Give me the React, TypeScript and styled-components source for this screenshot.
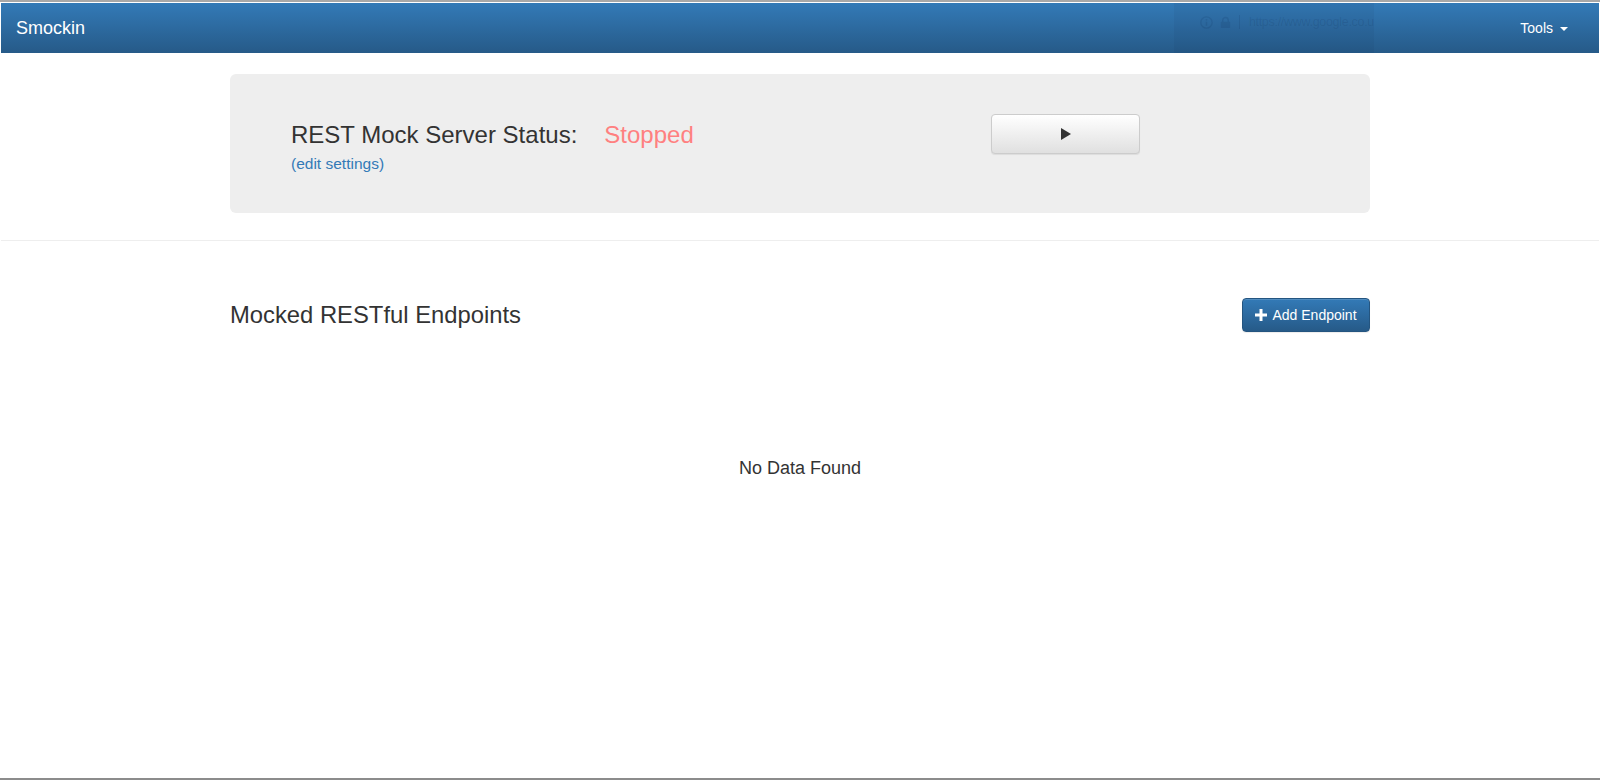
import React from "react"
import styled, { createGlobalStyle } from "styled-components"

const GlobalStyle = createGlobalStyle`
  html, body {
    margin: 0;
    padding: 0;
    background: #fff;
  }
  body {
    font-family: "Liberation Sans", Arial, Helvetica, sans-serif;
    font-size: 14px;
    line-height: 1.42857;
    color: #333;
  }
  * {
    box-sizing: border-box;
  }
`

const Page = styled.div`
  min-height: 100vh;
  border-top: 2px solid #a8a8a8;
  border-bottom: 2px solid #8c8c8c;
  padding: 1px 1px 0;
  display: flex;
  flex-direction: column;
`

const Navbar = styled.nav`
  position: relative;
  height: 50px;
  display: flex;
  align-items: center;
  justify-content: space-between;
  padding: 0 31px 0 15px;
  background-image: linear-gradient(to bottom, #337ab7 0%, #265a88 100%);
  color: #fff;
`

const Brand = styled.a`
  font-size: 18px;
  line-height: 20px;
  color: #fff;
  text-decoration: none;
`

const NavMenu = styled.a`
  display: flex;
  align-items: center;
  gap: 7px;
  font-size: 14px;
  color: #fff;
  text-decoration: none;
  padding-top: 2px;
`

const Caret = styled.span`
  display: inline-block;
  width: 0;
  height: 0;
  border-top: 4px solid #fff;
  border-left: 4px solid transparent;
  border-right: 4px solid transparent;
`

// faint url-bar ghost burned into the screenshot
const Ghost = styled.div`
  position: absolute;
  top: 0;
  bottom: 0;
  left: 1173px;
  width: 200px;
  background: rgba(10, 30, 70, 0.06);
  overflow: hidden;
  display: flex;
  align-items: center;
  gap: 7px;
  padding: 0 0 12px 26px;
  color: rgba(10, 30, 70, 0.12);
  font-size: 12.5px;
  letter-spacing: -0.3px;
  line-height: 16px;
  white-space: nowrap;
`

const GhostSep = styled.span`
  width: 1px;
  height: 14px;
  background: rgba(10, 30, 70, 0.12);
  margin: 0 2px 0 1px;
`

const Container = styled.main`
  width: 1170px;
  margin: 0 auto;
  padding: 0 15px;
`

const Jumbotron = styled.section`
  margin-top: 21px;
  background: #eee;
  border-radius: 6px;
  padding: 41px 60px 38px 61px;
  display: flex;
  align-items: flex-start;
`

const StatusBlock = styled.div`
  width: 700px;
  padding-top: 7px;
`

const StatusHeading = styled.h3`
  margin: 0;
  font-size: 24px;
  font-weight: 400;
  line-height: 26px;
  color: #333;
`

const StatusValue = styled.span<{ $running?: boolean }>`
  margin-left: 27px;
  color: ${(p) => (p.$running ? "#5cb85c" : "#ff8080")};
`

const EditLink = styled.a`
  display: inline-block;
  margin-top: 6px;
  color: #337ab7;
  text-decoration: none;
  font-size: 15.5px;
  line-height: 20px;
`

const Button = styled.button<{ $primary?: boolean }>`
  display: inline-flex;
  align-items: center;
  justify-content: center;
  gap: 5px;
  font-family: inherit;
  font-size: 14px;
  line-height: 20px;
  border-radius: 4px;
  cursor: pointer;
  color: ${(p) => (p.$primary ? "#fff" : "#333")};
  border: 1px solid ${(p) => (p.$primary ? "#245580" : "#ccc")};
  background-image: ${(p) =>
    p.$primary
      ? "linear-gradient(to bottom, #337ab7 0%, #265a88 100%)"
      : "linear-gradient(to bottom, #fff 0%, #e0e0e0 100%)"};
  box-shadow: inset 0 1px 0 rgba(255, 255, 255, 0.15),
    0 1px 1px rgba(0, 0, 0, 0.075);
`

const PlayButton = styled(Button)`
  width: 149px;
  height: 40px;
  margin-top: -1px;
`

const AddButton = styled(Button)`
  width: 128px;
  height: 34px;
  padding: 0 10px;
`

const Divider = styled.hr`
  margin: 27px 0 0;
  border: 0;
  border-top: 1px solid #eee;
`

const HeaderRow = styled.div`
  margin-top: 57px;
  display: flex;
  justify-content: space-between;
  align-items: center;
`

const SectionTitle = styled.h3`
  margin: 0;
  font-size: 23.8px;
  font-weight: 400;
  line-height: 26px;
  color: #333;
`

const Empty = styled.p`
  margin: 124px 0 0;
  text-align: center;
  font-size: 18px;
  line-height: 24px;
  color: #333;
`

const PlayIcon = () => (
  <svg width="10" height="12" viewBox="0 0 10 12">
    <path d="M0 0 L10 6 L0 12 Z" fill="#333" />
  </svg>
)

const PlusIcon = () => (
  <svg width="12" height="12" viewBox="0 0 12 12">
    <path d="M4.5 0h3v4.5H12v3H7.5V12h-3V7.5H0v-3h4.5z" fill="#fff" />
  </svg>
)

const InfoIcon = () => (
  <svg width="13" height="13" viewBox="0 0 16 16">
    <circle cx="8" cy="8" r="7" fill="none" stroke="currentColor" strokeWidth="1.6" />
    <rect x="7.1" y="7" width="1.8" height="5" fill="currentColor" />
    <rect x="7.1" y="3.8" width="1.8" height="1.8" fill="currentColor" />
  </svg>
)

const LockIcon = () => (
  <svg width="11" height="13" viewBox="0 0 14 16">
    <path d="M3.5 7V5a3.5 3.5 0 0 1 7 0v2" fill="none" stroke="currentColor" strokeWidth="1.8" />
    <rect x="1" y="7" width="12" height="8" rx="1" fill="currentColor" />
  </svg>
)

export default function App() {
  return (
    <>
      <GlobalStyle />
      <Page>
        <Navbar>
          <Brand href="#">Smockin</Brand>
          <Ghost>
            <InfoIcon />
            <LockIcon />
            <GhostSep />
            <span>https://www.google.co.u</span>
          </Ghost>
          <NavMenu href="#">
            Tools <Caret />
          </NavMenu>
        </Navbar>
        <Container>
          <Jumbotron>
            <StatusBlock>
              <StatusHeading>
                REST Mock Server Status:
                <StatusValue>Stopped</StatusValue>
              </StatusHeading>
              <EditLink href="#">(edit settings)</EditLink>
            </StatusBlock>
            <PlayButton>
              <PlayIcon />
            </PlayButton>
          </Jumbotron>
        </Container>
        <Divider />
        <Container>
          <HeaderRow>
            <SectionTitle>Mocked RESTful Endpoints</SectionTitle>
            <AddButton $primary>
              <PlusIcon />
              Add Endpoint
            </AddButton>
          </HeaderRow>
          <Empty>No Data Found</Empty>
        </Container>
      </Page>
    </>
  )
}
